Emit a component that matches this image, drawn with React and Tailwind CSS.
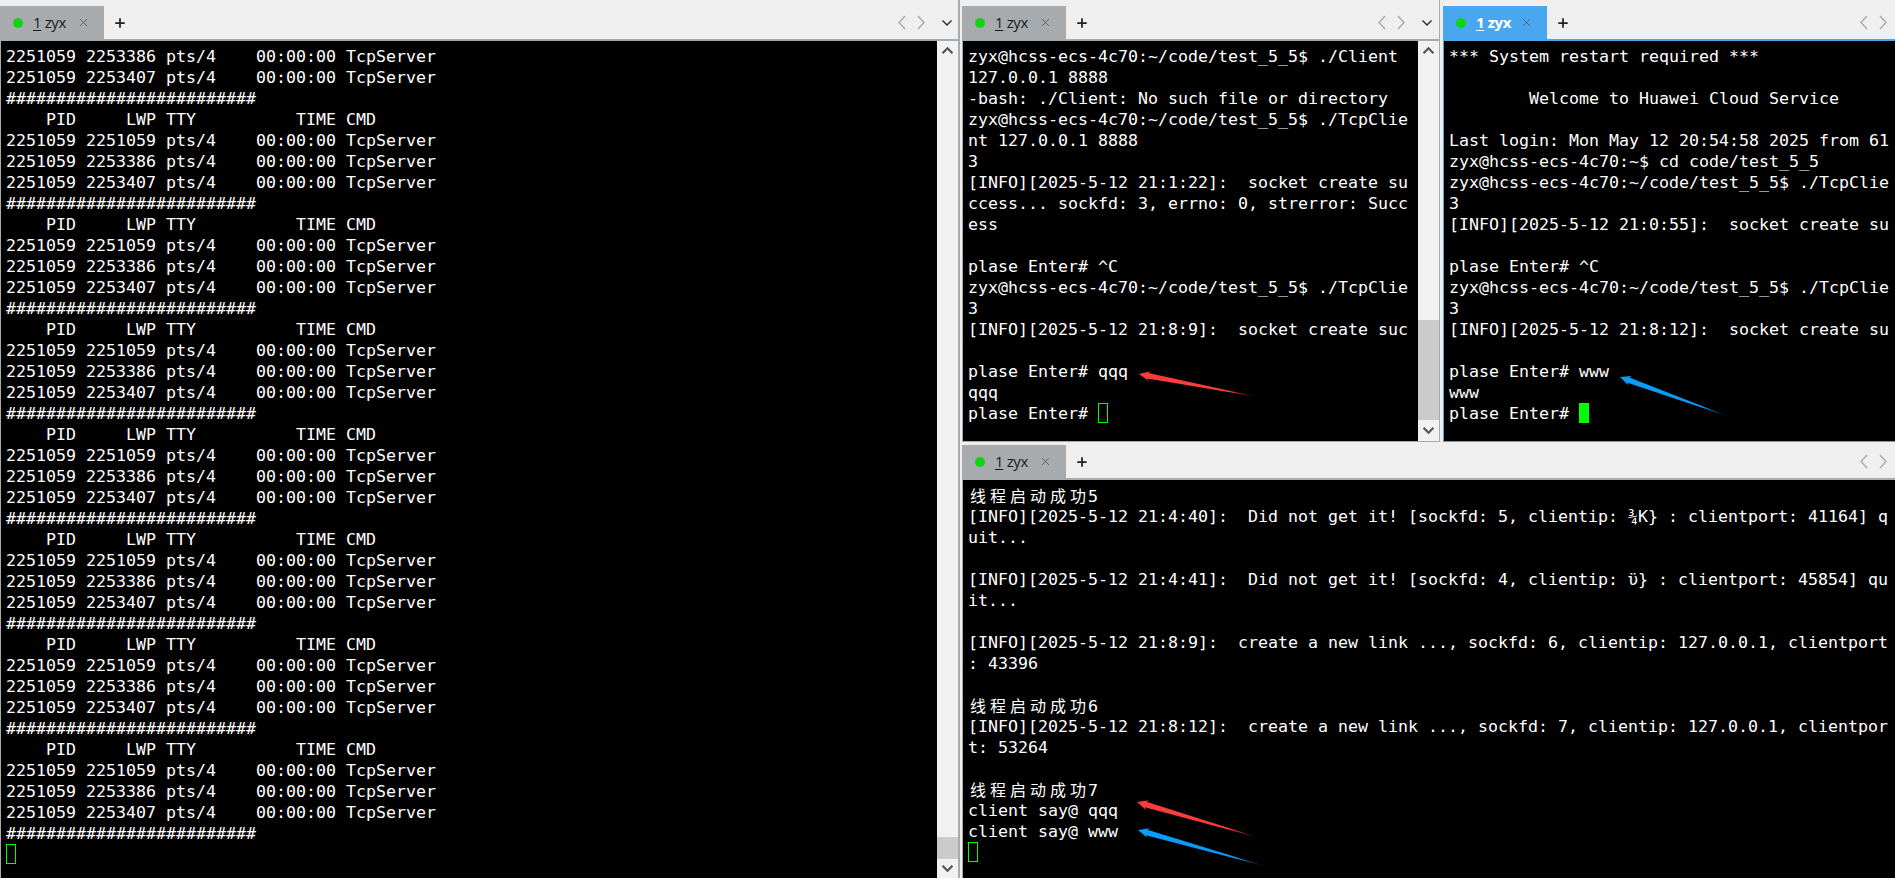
import React from "react";
import { X, Plus } from "lucide-react";

const mono = "font-['DejaVu_Sans_Mono',monospace] text-[16.61px] leading-[21px] text-white";

function Chevron({ dir }) {
  const p = dir === "left" ? "7,1 1,7.5 7,14" : "1,1 7,7.5 1,14";
  return (
    <svg width="8" height="15" viewBox="0 0 8 15" fill="none" stroke="#a9a9a9" strokeWidth="1.4">
      <polyline points={p} />
    </svg>
  );
}

function Down({ color = "#333", w = 10, h = 6, sw = 1.5 }) {
  return (
    <svg width={w} height={h} viewBox="0 0 10 6" fill="none" stroke={color} strokeWidth={sw}>
      <polyline points="0.5,0.5 5,5 9.5,0.5" />
    </svg>
  );
}

function Tab({ active }) {
  return (
    <div className={`w-[104px] h-full flex items-center shrink-0 ${active ? "bg-[#48a7ef]" : "bg-[#a7abae]"}`}>
      <span className="ml-[13px] w-[10px] h-[10px] rounded-full bg-[#0fd40f] shrink-0" />
      <span className={`ml-[10px] w-[44px] font-['Open_Sans',sans-serif] text-[15px] tracking-[-0.4px] ${active ? "font-bold text-white" : "text-[#1a1a1a]"}`}>
        <span className="underline underline-offset-2">1</span> zyx
      </span>
      <X size={13} strokeWidth={1.5} className="text-[#555] shrink-0" />
    </div>
  );
}

function TabBar({ active, down, navClass, topClass, borderClass }) {
  return (
    <div className={`bg-[#efefef] flex items-stretch border-b-2 shrink-0 ${topClass} ${borderClass}`}>
      <Tab active={active} />
      <div className="ml-[9px] flex items-center">
        <Plus size={14} strokeWidth={3} className="text-[#222]" />
      </div>
      <div className={`ml-auto flex items-center gap-[11px] ${navClass}`}>
        <Chevron dir="left" />
        <Chevron dir="right" />
        {down && <span className="ml-[6px] flex"><Down /></span>}
      </div>
    </div>
  );
}

function Cjk({ text }) {
  return (
    <>
      {Array.from(text).map((c, i) => (
        <span key={i} className="inline-block w-[20px] text-center font-['Noto_Sans_CJK_SC',sans-serif] text-[16px]">{c}</span>
      ))}
    </>
  );
}

function Terminal({ lines, cursor }) {
  return (
    <div className={`flex-1 min-w-0 bg-black pl-[5px] pt-[5px] overflow-hidden ${mono}`}>
      {lines.map((l, i) => (
        <div key={i} className="h-[21px] whitespace-pre">
          {l.cjk ? (
            <>
              <Cjk text={l.cjk} />
              {l.t}
            </>
          ) : (
            l
          )}
        </div>
      ))}
      <div className="h-[21px] whitespace-pre">
        {cursor.prefix}
        <span className={`inline-block align-top w-[10px] h-[20px] border border-[#00ff00] ${cursor.solid ? "bg-[#00ff00]" : ""}`} />
      </div>
    </div>
  );
}

function Scrollbar({ thumbClass, bottomClass }) {
  return (
    <div className="w-[21px] shrink-0 bg-[#f1f1f1] flex flex-col items-center relative">
      <div className="h-[20px] flex items-center justify-center w-full rotate-180">
        <Down color="#555" w={11} h={7} sw={2} />
      </div>
      <div className="flex-1 w-full flex flex-col justify-end">
        <div className={`w-full bg-[#cbcbcb] ${thumbClass}`} />
      </div>
      <div className={`flex items-center justify-center w-full ${bottomClass}`}>
        <Down color="#555" w={11} h={7} sw={2} />
      </div>
    </div>
  );
}

function Arrow({ id, tip, tail, color }) {
  const dx = tail[0] - tip[0];
  const dy = tail[1] - tip[1];
  const len = Math.hypot(dx, dy);
  const ux = dx / len;
  const uy = dy / len;
  const nx = -uy;
  const ny = ux;
  const pt = (a, b) => `${tip[0] + ux * a + nx * b},${tip[1] + uy * a + ny * b}`;
  const points = [pt(0, 0), pt(11, 5), pt(9, 2.8), `${tail[0]},${tail[1]}`, pt(9, -2.8), pt(11, -5)].join(" ");
  return (
    <>
      <defs>
        <linearGradient id={id} gradientUnits="userSpaceOnUse" x1={tip[0]} y1={tip[1]} x2={tail[0]} y2={tail[1]}>
          <stop offset="0" stopColor={color} />
          <stop offset="0.75" stopColor={color} />
          <stop offset="1" stopColor="#000" />
        </linearGradient>
      </defs>
      <polygon points={points} fill={`url(#${id})`} />
    </>
  );
}

const blockRows = [
  "2251059 2251059 pts/4    00:00:00 TcpServer",
  "2251059 2253386 pts/4    00:00:00 TcpServer",
  "2251059 2253407 pts/4    00:00:00 TcpServer",
];
const hashes = "#########################";
const leftLines = [blockRows[1], blockRows[2], hashes];
for (let i = 0; i < 7; i++) {
  leftLines.push("    PID     LWP TTY          TIME CMD", ...blockRows, hashes);
}

const clientA = [
  "zyx@hcss-ecs-4c70:~/code/test_5_5$ ./Client",
  "127.0.0.1 8888",
  "-bash: ./Client: No such file or directory",
  "zyx@hcss-ecs-4c70:~/code/test_5_5$ ./TcpClie",
  "nt 127.0.0.1 8888",
  "3",
  "[INFO][2025-5-12 21:1:22]:  socket create su",
  "ccess... sockfd: 3, errno: 0, strerror: Succ",
  "ess",
  "",
  "plase Enter# ^C",
  "zyx@hcss-ecs-4c70:~/code/test_5_5$ ./TcpClie",
  "3",
  "[INFO][2025-5-12 21:8:9]:  socket create suc",
  "",
  "plase Enter# qqq",
  "qqq",
];

const clientB = [
  "*** System restart required ***",
  "",
  "        Welcome to Huawei Cloud Service",
  "",
  "Last login: Mon May 12 20:54:58 2025 from 61",
  "zyx@hcss-ecs-4c70:~$ cd code/test_5_5",
  "zyx@hcss-ecs-4c70:~/code/test_5_5$ ./TcpClie",
  "3",
  "[INFO][2025-5-12 21:0:55]:  socket create su",
  "",
  "plase Enter# ^C",
  "zyx@hcss-ecs-4c70:~/code/test_5_5$ ./TcpClie",
  "3",
  "[INFO][2025-5-12 21:8:12]:  socket create su",
  "",
  "plase Enter# www",
  "www",
];

const serverLines = [
  { cjk: "线程启动成功", t: "5" },
  "[INFO][2025-5-12 21:4:40]:  Did not get it! [sockfd: 5, clientip: ¾K} : clientport: 41164] q",
  "uit...",
  "",
  "[INFO][2025-5-12 21:4:41]:  Did not get it! [sockfd: 4, clientip: ϋ} : clientport: 45854] qu",
  "it...",
  "",
  "[INFO][2025-5-12 21:8:9]:  create a new link ..., sockfd: 6, clientip: 127.0.0.1, clientport",
  ": 43396",
  "",
  { cjk: "线程启动成功", t: "6" },
  "[INFO][2025-5-12 21:8:12]:  create a new link ..., sockfd: 7, clientip: 127.0.0.1, clientpor",
  "t: 53264",
  "",
  { cjk: "线程启动成功", t: "7" },
  "client say@ qqq",
  "client say@ www",
];

export default function App() {
  return (
    <div className="relative w-[1895px] h-[878px] overflow-hidden flex bg-[#efefef]">
      <div className="w-[960px] shrink-0 flex flex-col border-r-2 border-[#a7abae]">
        <TabBar down navClass="pr-[6px]" topClass="h-[41px] pt-[6px]" borderClass="border-[#a7abae]" />
        <div className="flex-1 min-h-0 flex border-l border-[#a7abae]">
          <Terminal lines={leftLines} cursor={{ prefix: "" }} />
          <Scrollbar thumbClass="h-[22px]" bottomClass="h-[19px]" />
        </div>
      </div>

      <div className="ml-[2px] flex-1 min-w-0 flex flex-col">
        <div className="h-[442px] shrink-0 flex gap-[3px]">
          <div className="w-[478px] shrink-0 flex flex-col border-r border-b border-[#a7abae]">
            <TabBar down navClass="pr-[7px]" topClass="h-[41px] pt-[6px]" borderClass="border-[#a7abae]" />
            <div className="flex-1 min-h-0 flex border-l border-[#a7abae]">
              <Terminal lines={clientA} cursor={{ prefix: "plase Enter# " }} />
              <Scrollbar thumbClass="h-[100px]" bottomClass="h-[21px]" />
            </div>
          </div>
          <div className="flex-1 min-w-0 flex flex-col border-b border-[#48a7ef]">
            <TabBar active navClass="pr-[8px]" topClass="h-[41px] pt-[6px]" borderClass="border-[#48a7ef]" />
            <div className="flex-1 min-h-0 flex border-l border-[#48a7ef]">
              <Terminal lines={clientB} cursor={{ prefix: "plase Enter# ", solid: true }} />
            </div>
          </div>
        </div>
        <div className="flex-1 min-h-0 flex flex-col">
          <TabBar navClass="pr-[8px]" topClass="h-[38px] pt-[3px]" borderClass="border-[#a7abae]" />
          <div className="flex-1 min-h-0 flex border-l border-[#a7abae]">
            <Terminal lines={serverLines} cursor={{ prefix: "" }} />
          </div>
        </div>
      </div>

      <svg className="absolute inset-0 pointer-events-none" width="1895" height="878">
        <Arrow id="a1" tip={[1139, 374]} tail={[1258, 397]} color="#ff3b3b" />
        <Arrow id="a2" tip={[1620, 377]} tail={[1730, 417]} color="#0a9bff" />
        <Arrow id="a3" tip={[1137, 802]} tail={[1260, 838]} color="#ff3b3b" />
        <Arrow id="a4" tip={[1138, 830]} tail={[1268, 867]} color="#0a9bff" />
      </svg>
    </div>
  );
}
